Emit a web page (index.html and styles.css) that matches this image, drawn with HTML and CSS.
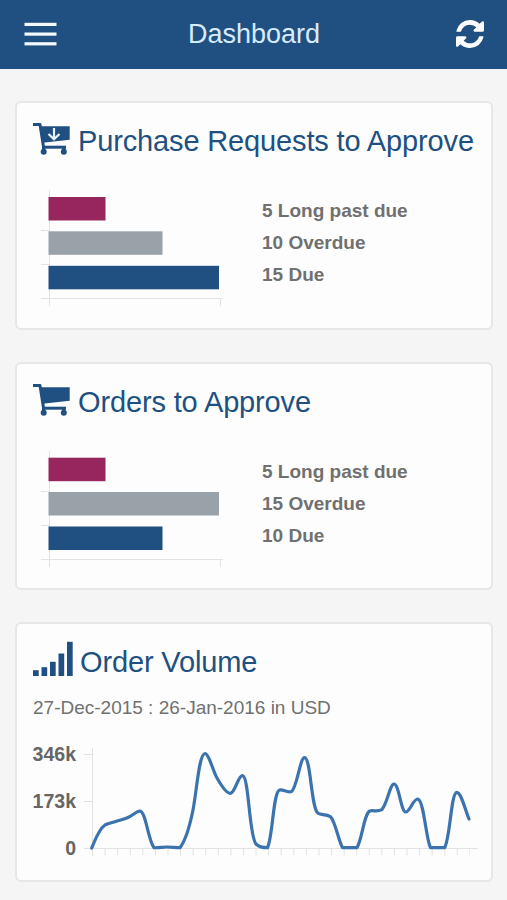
FILE: index.html
```html
<!DOCTYPE html>
<html lang="en">
<head>
    <meta charset="UTF-8">
    <meta name="viewport" content="width=device-width, initial-scale=1.0">
    <title>Dashboard</title>
    <link rel="stylesheet" href="styles.css">
</head>
<body>
    <header class="topbar">
        <button class="icon-button" aria-label="Menu">
            <svg width="33" height="24" viewBox="0 0 33 24" fill="#f4f9ff">
                <rect x="0.500" y="0.800" width="32" height="3.200"/>
                <rect x="0.500" y="10.500" width="32" height="3.200"/>
                <rect x="0.500" y="20.200" width="32" height="3.200"/>
            </svg>
        </button>
        <h1>Dashboard</h1>
        <button class="icon-button" aria-label="Refresh">
            <svg width="28" height="28" viewBox="0 128 1536 1536" fill="#fff">
                <path d="M1511 1056q0 5-1 7-64 268-268 434.500T764 1664q-146 0-282.500-55T238 1452l-129 129q-19 19-45 19t-45-19-19-45v-448q0-26 19-45t45-19h448q26 0 45 19t19 45-19 45l-137 137q71 66 161 102t187 36q134 0 250-65t186-179q11-17 53-117 8-23 30-23h192q13 0 22.500 9.500t9.500 22.500zm25-800v448q0 26-19 45t-45 19h-448q-26 0-45-19t-19-45 19-45l138-138Q969 384 768 384q-134 0-250 65T332 628q-11 17-53 117-8 23-30 23H50q-13 0-22.500-9.500T18 736v-7q65-268 270-434.500T768 128q146 0 284 55.500T1297 340l130-129q19-19 45-19t45 19 19 45z"/>
            </svg>
        </button>
    </header>

    <main class="cards">
        <section class="card">
            <h2>
                <svg class="cart-icon" width="38" height="36" viewBox="0 0 38 36">
                    <path d="M1 4.500H8L11.700 28" fill="none" stroke="#205081" stroke-width="3" stroke-linejoin="round"/>
                    <path d="M8.500 6.300H37.700V19.800L10.500 22.800Z" fill="#205081"/>
                    <path d="M10 27.200H34" stroke="#205081" stroke-width="3"/>
                    <path d="M11.700 27V31M31.800 27V31" stroke="#205081" stroke-width="3"/>
                    <circle cx="11.700" cy="31.700" r="3" fill="#205081"/>
                    <circle cx="31.800" cy="31.700" r="3" fill="#205081"/>
                    <path d="M22 8V19M16.500 14L22 19.300L27.500 14" fill="none" stroke="#e8f4fb" stroke-width="2.200"/>
                </svg>
                Purchase Requests to Approve
            </h2>
            <div class="summary">
                <svg class="bar-chart" width="229" height="124" viewBox="0 0 229 124">
                    <path class="axis" d="M16.500 4V120M8 44.500H16M8 78.500H16M8 112.500H190M187.500 112V120"/>
                    <rect class="long-past" x="15.500" y="11" width="57" height="23.500"/>
                    <rect class="overdue" x="15.500" y="45.300" width="114" height="23.500"/>
                    <rect class="due" x="15.500" y="79.800" width="170.500" height="23.500"/>
                </svg>
                <ul>
                    <li>5 Long past due</li>
                    <li>10 Overdue</li>
                    <li>15 Due</li>
                </ul>
            </div>
        </section>

        <section class="card">
            <h2>
                <svg class="cart-icon" width="38" height="36" viewBox="0 0 38 36">
                    <path d="M1 4.500H8L11.700 28" fill="none" stroke="#205081" stroke-width="3" stroke-linejoin="round"/>
                    <path d="M8.500 6.300H37.700V19.800L10.500 22.800Z" fill="#205081"/>
                    <path d="M10 27.200H34" stroke="#205081" stroke-width="3"/>
                    <path d="M11.700 27V31M31.800 27V31" stroke="#205081" stroke-width="3"/>
                    <circle cx="11.700" cy="31.700" r="3" fill="#205081"/>
                    <circle cx="31.800" cy="31.700" r="3" fill="#205081"/>
                </svg>
                Orders to Approve
            </h2>
            <div class="summary">
                <svg class="bar-chart" width="229" height="124" viewBox="0 0 229 124">
                    <path class="axis" d="M16.500 4V120M8 44.500H16M8 78.500H16M8 112.500H190M187.500 112V120"/>
                    <rect class="long-past" x="15.500" y="10.700" width="57" height="23.500"/>
                    <rect class="overdue" x="15.500" y="45" width="170.500" height="23.500"/>
                    <rect class="due" x="15.500" y="79.500" width="114" height="23.500"/>
                </svg>
                <ul>
                    <li>5 Long past due</li>
                    <li>15 Overdue</li>
                    <li>10 Due</li>
                </ul>
            </div>
        </section>

        <section class="card">
            <h2>
                <svg class="volume-icon" width="40" height="36" viewBox="0 0 40 36" fill="#205081">
                    <rect x="0" y="29.200" width="5.700" height="5.800"/>
                    <rect x="8.500" y="26.200" width="5.700" height="8.800"/>
                    <rect x="17" y="20.800" width="5.700" height="14.200"/>
                    <rect x="25.500" y="12.500" width="5.700" height="22.500"/>
                    <rect x="34" y="0.800" width="5.700" height="34.200"/>
                </svg>
                Order Volume
            </h2>
            <p class="period">27-Dec-2015 : 26-Jan-2016 in USD</p>
            <svg class="line-chart" width="446" height="120" viewBox="0 0 446 120">
                <path class="axis" d="M59.500 6V114M51 12.500H59M51 59.500H59M51 106.500H445"/>
                <!-- one tick per day -->
                <path class="ticks" d="M59 110H437"/>
                <text x="43" y="18.500">346k</text>
                <text x="43" y="65.500">173k</text>
                <text x="43" y="113">0</text>
                <path class="volume" d="M58.700 106C62 98 66 87 72 83C76 81 80 80.500 84 79C88 78 92 77 96 75C100 73 104 69 107 69C113 70 115 98 121 105.700C125 106 130 105 134 105C138 105 143 105.700 147 105.700C152 99 156 88 160 68C164 47 166 12 172 11.500C176 12 180 29 184 36C188 43 193 51.300 197 51.300C202 51.300 205 33.700 209.500 33.700C216 34 216 94 223 102C226 105 231 105.700 234.500 105.700C240 94 240 50 246.700 48C250 47 254 51 258.500 49.500C264 46 267 15.700 271.500 15.700C278 16 278 66 285 71.300C288 73.500 293 71.500 297.500 74.700C302 79 306 100 309.500 105.700H324C329 98 331 72 336.700 69C340 68 345 70 348.700 67.700C354 63 357 42 361 42C366 42 368 70 372.700 70C377 70 380 57 384.700 57C391 58 393 98 397.500 105.700H411.500C417 98 418 51 423.700 50.300C428 50.300 432 67 436 77"/>
            </svg>
        </section>
    </main>
</body>
</html>
```

FILE: styles.css
```css
* { box-sizing: border-box; }

body {
    margin: 0;
    background: #f5f5f5;
    color: #707070;
    font-family: "Liberation Sans", Arial, sans-serif;
}

h1, h2, p, ul { margin: 0; padding: 0; }
svg { display: block; flex: none; }

/* Top bar */
.topbar {
    display: flex;
    align-items: center;
    justify-content: space-between;
    height: 69px;
    padding: 0 23px 1px 24px;
    background: #205081;
}

.topbar h1 {
    color: #d8eafe;
    font-size: 27px;
    font-weight: normal;
    line-height: 32px;
    padding: 0 5px 1px 0;
}

.icon-button {
    padding: 0;
    border: 0;
    background: none;
}

/* Cards */
.cards {
    display: flex;
    flex-direction: column;
    gap: 32px;
    padding: 32px 14px 19px 15px;
}

.card {
    padding: 17px 16px 17.5px;
    border: 2px solid #e7e7e7;
    border-radius: 6px;
    background: #fdfdfd;
}

.card h2 {
    display: flex;
    align-items: flex-start;
    height: 40px;
    color: #205081;
    font-size: 29px;
    font-weight: normal;
    letter-spacing: -0.14px;
    line-height: 43px;
    white-space: nowrap;
}

.cart-icon { margin: 0 8px 0 -1px; }
.volume-icon { margin-right: 7px; }

.summary {
    display: flex;
    margin-top: 26px;
}

.summary ul {
    padding-top: 9px;
    list-style: none;
    font-size: 19px;
    font-weight: bold;
    line-height: 32px;
}

.period {
    margin-top: 15px;
    font-size: 19px;
    line-height: 24px;
}

/* Charts */
.axis {
    fill: none;
    stroke: #e2e2e2;
    stroke-width: 1;
}

.long-past { fill: #96265d; }
.overdue { fill: #98a2a8; }
.due { fill: #205081; }

.line-chart { margin-top: 22px; }

.line-chart text {
    fill: #666;
    font-size: 19.5px;
    font-weight: bold;
    text-anchor: end;
}

.ticks {
    stroke: #e2e2e2;
    stroke-width: 7;
    stroke-dasharray: 1 11.58;
}

.volume {
    fill: none;
    stroke: #3b73af;
    stroke-width: 3.2;
    stroke-linecap: round;
    stroke-linejoin: round;
}
```
